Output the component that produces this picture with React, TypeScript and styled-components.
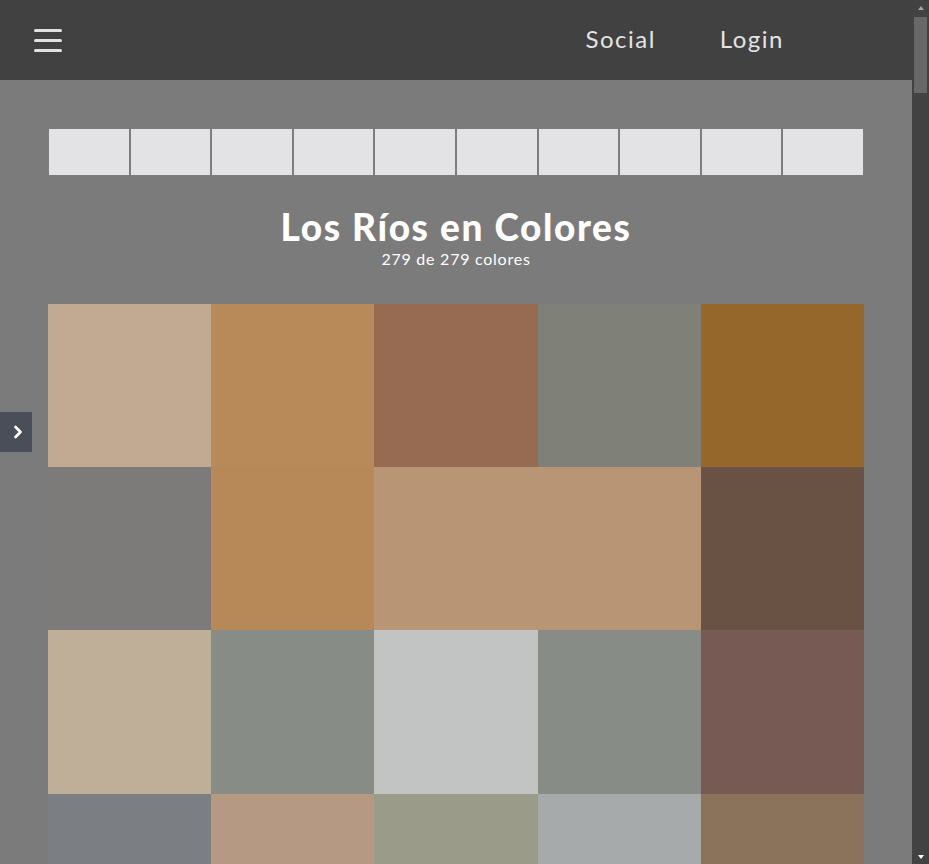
import React from "react";
import styled, { createGlobalStyle } from "styled-components";
import { ChevronRight } from "lucide-react";

const Global = createGlobalStyle`
  html, body { margin: 0; padding: 0; background: #7b7b7b; overflow: hidden; }
  body { font-family: Lato, "Open Sans", sans-serif; }
  * { box-sizing: border-box; }
`;

const Shell = styled.div`
  display: flex;
  height: 100vh;
  position: relative;
`;

const Page = styled.div`
  flex: 1;
  min-width: 0;
  overflow-y: auto;
  scrollbar-width: none;
  &::-webkit-scrollbar { display: none; }
`;

const Rail = styled.div`
  width: 17px;
  flex: none;
  background: #424242;
  display: flex;
  flex-direction: column;
  align-items: center;
`;

const RailButton = styled.div<{ $down?: boolean }>`
  height: 17px;
  width: 17px;
  flex: none;
  display: flex;
  align-items: center;
  justify-content: center;
  &::before {
    content: "";
    width: 0;
    height: 0;
    border-left: 3.5px solid transparent;
    border-right: 3.5px solid transparent;
    ${(p) =>
      p.$down
        ? "border-top: 4px solid #ffffff; margin-top: 2px;"
        : "border-bottom: 4px solid #a3a3a3; margin-top: -2px;"}
  }
`;

const RailTrack = styled.div`
  flex: 1;
  width: 100%;
  padding: 0 2px;
`;

const RailThumb = styled.div`
  height: 76px;
  background: #686868;
`;

const Header = styled.header`
  height: 80px;
  background: #414141;
  display: flex;
  align-items: center;
  padding-left: 34px;
`;

const Burger = styled.button`
  width: 28px;
  height: 23px;
  padding: 0;
  border: 0;
  background: transparent;
  display: flex;
  flex-direction: column;
  justify-content: space-between;
  cursor: pointer;
`;

const Bar = styled.span`
  display: block;
  height: 3px;
  width: 28px;
  border-radius: 2px;
  background: #e2e2e2;
`;

const Nav = styled.nav`
  margin-left: auto;
  margin-right: 128px;
  padding-bottom: 4px;
  display: flex;
  gap: 64px;
`;

const NavLink = styled.a`
  font-family: Lato, sans-serif;
  font-size: 24px;
  color: #e4e4e4;
  text-decoration: none;
  letter-spacing: 1.5px;
`;

const Main = styled.main`
  padding: 48px 48px 60px;
`;

const Strip = styled.div`
  display: grid;
  grid-template-columns: repeat(10, 1fr);
  height: 48px;
`;

const StripCell = styled.div`
  background: #e3e3e5;
  border: 1px solid #7d7d7d;
`;

const TitleBlock = styled.div`
  text-align: center;
  color: #ffffff;
  padding-top: 29px;
  height: 128px;
`;

const Title = styled.h1`
  margin: 0;
  font-family: Lato, sans-serif;
  font-weight: 900;
  font-size: 37px;
  line-height: 44px;
  letter-spacing: 1.6px;
`;

const Subtitle = styled.div`
  font-family: Lato, sans-serif;
  font-size: 16px;
  line-height: 18px;
  margin-top: 1px;
  letter-spacing: 0.75px;
`;

const Grid = styled.div`
  display: grid;
  grid-template-columns: repeat(5, 1fr);
`;

const Swatch = styled.div<{ $c: string }>`
  aspect-ratio: 1 / 1;
  background: ${(p) => p.$c};
`;

const SideToggle = styled.button`
  position: absolute;
  left: 0;
  top: 412px;
  width: 32px;
  height: 40px;
  border: 0;
  padding: 0 0 0 4px;
  background: #4a4e59;
  color: #ffffff;
  display: flex;
  align-items: center;
  justify-content: center;
  cursor: pointer;
`;

const base = [
  "#c2a991", "#b98a59", "#966b52", "#7f8078", "#96672b",
  "#7d7b79", "#b88958", "#b89675", "#b89675", "#695143",
  "#bfae98", "#888c86", "#c2c4c3", "#888c86", "#785a55",
  "#7b7e83", "#b59983", "#9a9b89", "#a6aaab", "#8a735a",
];

function makeColors(): string[] {
  const out = [...base];
  let seed = 12345;
  const rnd = () => {
    seed = (seed * 1103515245 + 12345) & 0x7fffffff;
    return seed / 0x7fffffff;
  };
  while (out.length < 279) {
    const pick = base[Math.floor(rnd() * base.length)];
    const r = parseInt(pick.slice(1, 3), 16);
    const g = parseInt(pick.slice(3, 5), 16);
    const b = parseInt(pick.slice(5, 7), 16);
    const d = Math.floor((rnd() - 0.5) * 40);
    const cl = (v: number) => Math.max(0, Math.min(255, v + d)).toString(16).padStart(2, "0");
    out.push("#" + cl(r) + cl(g) + cl(b));
  }
  return out;
}

const colors = makeColors();

export default function App() {
  return (
    <>
      <Global />
      <Shell>
        <Page>
          <Header>
            <Burger aria-label="menu">
              <Bar />
              <Bar />
              <Bar />
            </Burger>
            <Nav>
              <NavLink href="#">Social</NavLink>
              <NavLink href="#">Login</NavLink>
            </Nav>
          </Header>
          <Main>
            <Strip>
              {Array.from({ length: 10 }).map((_, i) => (
                <StripCell key={i} />
              ))}
            </Strip>
            <TitleBlock>
              <Title>Los Ríos en Colores</Title>
              <Subtitle>279 de 279 colores</Subtitle>
            </TitleBlock>
            <Grid>
              {colors.map((c, i) => (
                <Swatch key={i} $c={c} />
              ))}
            </Grid>
          </Main>
        </Page>
        <Rail aria-hidden="true">
          <RailButton />
          <RailTrack>
            <RailThumb />
          </RailTrack>
          <RailButton $down />
        </Rail>
        <SideToggle aria-label="abrir">
          <ChevronRight size={20} strokeWidth={3.2} />
        </SideToggle>
      </Shell>
    </>
  );
}
